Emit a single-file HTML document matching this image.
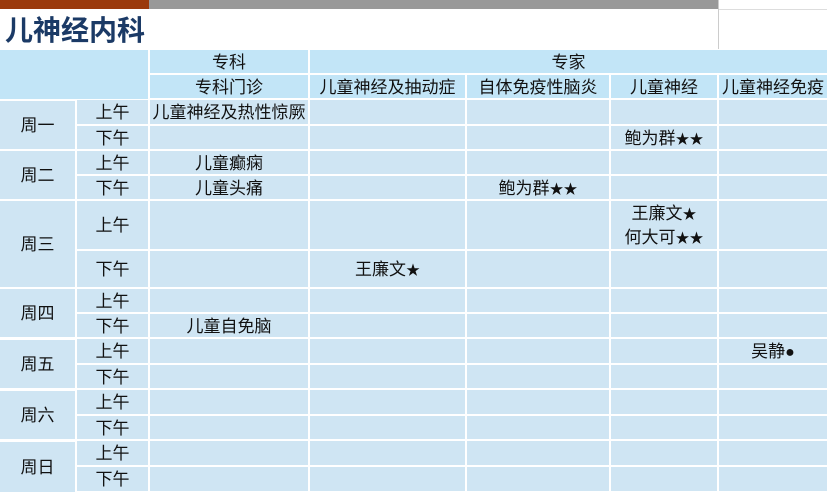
<!DOCTYPE html>
<html><head><meta charset="utf-8"><style>
body{margin:0;width:827px;height:492px;background:#fff;position:relative;overflow:hidden;font-family:"Liberation Sans","Noto Sans CJK SC",sans-serif;font-size:17px;color:#111}
.c{position:absolute;display:flex;flex-direction:column;align-items:center;justify-content:center;background:#cfe5f3;text-align:center;line-height:24px;white-space:nowrap;box-sizing:border-box;padding-top:2px}
.h{background:#c2e5f7}
.s{font-size:14px}
.d{font-size:16px}
</style></head><body>
<div style="position:absolute;left:0;top:0;width:149px;height:9px;background:#9b3a0c"></div>
<div style="position:absolute;left:149px;top:0;width:569px;height:9px;background:#999"></div>
<div style="position:absolute;left:718px;top:0;width:1px;height:49px;background:#ccc"></div>
<div style="position:absolute;left:719px;top:9px;width:108px;height:1px;background:#ddd"></div>
<div style="position:absolute;left:5px;top:11px;font-size:28px;font-weight:bold;color:#1b3a66;line-height:40px">儿神经内科</div>

<div class="c h" style="left:0;top:50px;width:148px;height:49px"></div>
<div class="c h" style="left:150px;top:50px;width:158px;height:23px">专科</div>
<div class="c h" style="left:310px;top:50px;width:517px;height:23px">专家</div>
<div class="c h" style="left:150px;top:75px;width:158px;height:23px">专科门诊</div>
<div class="c h" style="left:310px;top:75px;width:155px;height:23px">儿童神经及抽动症</div>
<div class="c h" style="left:467px;top:75px;width:142px;height:23px">自体免疫性脑炎</div>
<div class="c h" style="left:611px;top:75px;width:106px;height:23px">儿童神经</div>
<div class="c h" style="left:719px;top:75px;width:108px;height:23px">儿童神经免疫</div>

<div class="c" style="left:0;top:101px;width:75px;height:48px">周一</div>
<div class="c" style="left:0;top:151px;width:75px;height:48px">周二</div>
<div class="c" style="left:0;top:201px;width:75px;height:86px">周三</div>
<div class="c" style="left:0;top:289px;width:75px;height:48px">周四</div>
<div class="c" style="left:0;top:340px;width:75px;height:48px">周五</div>
<div class="c" style="left:0;top:391px;width:75px;height:48px">周六</div>
<div class="c" style="left:0;top:442px;width:75px;height:50px">周日</div>

<div id="g"></div>
<script>
var rows=[[100,125],[126,150],[151,175],[176,200],[201,250],[251,288],[289,313],[314,338],[339,364],[365,389],[390,415],[416,440],[441,466],[467,492]];
var cols=[[77,149],[150,309],[310,466],[467,610],[611,718],[719,827]];
var txt={"0,1":"儿童神经及热性惊厥","1,4":"<div>鲍为群<span class=s>★★</span></div>","2,1":"儿童癫痫","3,1":"儿童头痛","3,3":"<div>鲍为群<span class=s>★★</span></div>","4,4":"<div>王廉文<span class=s>★</span></div><div>何大可<span class=s>★★</span></div>","5,2":"<div>王廉文<span class=s>★</span></div>","7,1":"儿童自免脑","8,5":"<div>吴静<span class=d>●</span></div>"};
var h="";
for(var r=0;r<rows.length;r++){for(var k=0;k<cols.length;k++){
var t=k==0?(r%2==0?"上午":"下午"):(txt[r+","+k]||"");
var w=cols[k][1]-cols[k][0]-(k==5?0:1);
h+='<div class="c" style="left:'+cols[k][0]+'px;top:'+rows[r][0]+'px;width:'+w+'px;height:'+(rows[r][1]-rows[r][0]-1)+'px">'+t+'</div>';}}
document.getElementById("g").innerHTML=h;
</script>
</body></html>
